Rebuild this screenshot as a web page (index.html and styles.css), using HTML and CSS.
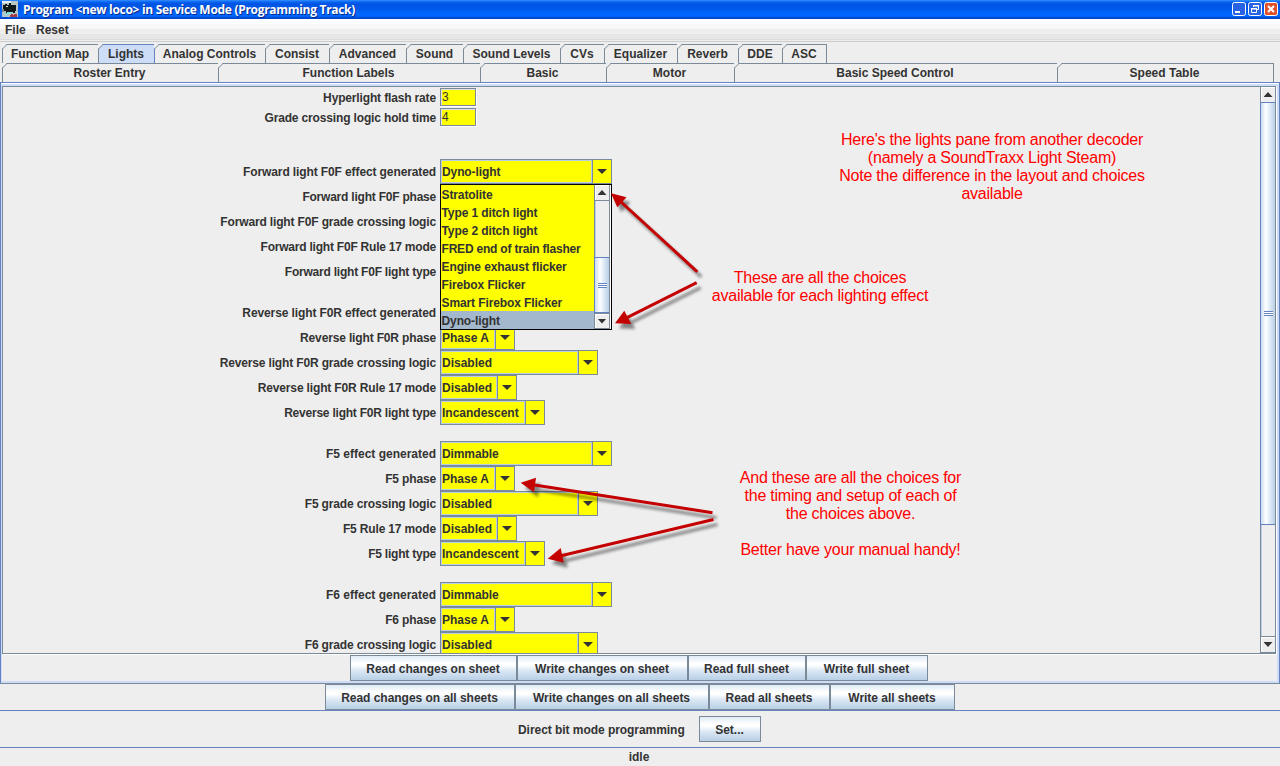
FILE: index.html
```html
<!DOCTYPE html>
<html lang="en">
<head>
<meta charset="utf-8">
<title>Program &lt;new loco&gt; in Service Mode (Programming Track)</title>
<link rel="stylesheet" href="styles.css">
</head>
<body>
<div class="window">
  <header class="titlebar">
    <svg class="app-icon" width="16" height="16" viewBox="0 0 16 16" shape-rendering="crispEdges">
      <rect width="16" height="16" fill="#b9c4c4"/><path d="M0 0h9v2H0z" fill="#e8f0ee"/><path d="M1 4h2v-1h2v1h2V2h2v2h5v6h-1v2h-2v-1H6v1H4v-2H2V8H1z" fill="#101818"/><path d="M0 8h2v3H0z" fill="#748888"/><path d="M5 11h5v2H5zM2 13h4v1H2z" fill="#7de0dc"/><path d="M8 14h1v-1h2v1h1v-1h3v3H8z" fill="#a33c44"/><path d="M4 5h2v1H4z" fill="#ddd"/>
    </svg>
    <span class="title-text">Program &lt;new loco&gt; in Service Mode (Programming Track)</span>
    <div class="win-buttons">
      <svg class="win-btn" width="14" height="14" viewBox="0 0 14 14"><rect x=".5" y=".5" width="13" height="13" rx="2" fill="#2a62e4" stroke="#fff"/><path d="M3 9h5v2H3z" fill="#fff"/></svg>
      <svg class="win-btn" width="14" height="14" viewBox="0 0 14 14"><rect x=".5" y=".5" width="13" height="13" rx="2" fill="#2a62e4" stroke="#fff"/><path d="M5.5 5V3.5h5v4H9" fill="none" stroke="#fff"/><path d="M5 3h6v1.5H5zM3 6h6v1.5H3z" fill="#fff"/><path d="M3.500 6.500h5v4h-5z" fill="none" stroke="#fff"/></svg>
      <svg class="win-btn" width="14" height="14" viewBox="0 0 14 14"><rect x=".5" y=".5" width="13" height="13" rx="2" fill="#e0502c" stroke="#fff"/><path d="M4 4l6 6M10 4l-6 6" stroke="#fff" stroke-width="2"/></svg>
    </div>
  </header>
  <nav class="menubar"><span class="menu-file">File</span><span>Reset</span></nav>

  <div class="tabs tabs-back">
    <div class="tab first w96"><svg class="cut"><use href="#cut"/></svg>Function Map</div>
    <div class="tab selected w56"><svg class="cut"><use href="#cut"/></svg>Lights</div>
    <div class="tab w111"><svg class="cut"><use href="#cut"/></svg>Analog Controls</div>
    <div class="tab w64"><svg class="cut"><use href="#cut"/></svg>Consist</div>
    <div class="tab w77"><svg class="cut"><use href="#cut"/></svg>Advanced</div>
    <div class="tab w57"><svg class="cut"><use href="#cut"/></svg>Sound</div>
    <div class="tab w97"><svg class="cut"><use href="#cut"/></svg>Sound Levels</div>
    <div class="tab w44"><svg class="cut"><use href="#cut"/></svg>CVs</div>
    <div class="tab w73"><svg class="cut"><use href="#cut"/></svg>Equalizer</div>
    <div class="tab w61"><svg class="cut"><use href="#cut"/></svg>Reverb</div>
    <div class="tab w44"><svg class="cut"><use href="#cut"/></svg>DDE</div>
    <div class="tab w44"><svg class="cut"><use href="#cut"/></svg>ASC</div>
  </div>
  <div class="tabs tabs-front">
    <div class="tab first w216"><svg class="cut"><use href="#cut"/></svg>Roster Entry</div>
    <div class="tab w262"><svg class="cut"><use href="#cut"/></svg>Function Labels</div>
    <div class="tab w126"><svg class="cut"><use href="#cut"/></svg>Basic</div>
    <div class="tab w128"><svg class="cut"><use href="#cut"/></svg>Motor</div>
    <div class="tab w323"><svg class="cut"><use href="#cut"/></svg>Basic Speed Control</div>
    <div class="tab w216"><svg class="cut"><use href="#cut"/></svg>Speed Table</div>
  </div>

  <main class="tab-content">
    <div class="scrollpane">
      <div class="viewport">
        <div class="form">
          <div class="row small"><label>Hyperlight flash rate</label><div class="field">3</div></div>
          <div class="row small"><label>Grade crossing logic hold time</label><div class="field">4</div></div>

          <section class="group group-forward">
            <div class="row"><label class="wide">Forward light F0F effect generated</label><div class="combo effect"><span>Dyno-light</span><i></i></div></div>
            <div class="row"><label class="tight">Forward light F0F phase</label></div>
            <div class="row"><label>Forward light F0F grade crossing logic</label></div>
            <div class="row"><label class="tight">Forward light F0F Rule 17 mode</label></div>
            <div class="row"><label class="tight">Forward light F0F light type</label></div>
            <div class="popup">
              <ul class="options">
                <li>Stratolite</li><li>Type 1 ditch light</li><li>Type 2 ditch light</li><li class="snug">FRED end of train flasher</li><li>Engine exhaust flicker</li><li>Firebox Flicker</li><li>Smart Firebox Flicker</li><li class="chosen">Dyno-light</li>
              </ul>
              <div class="scrollbar popup-bar"><div class="arrow-btn up"></div><div class="track"></div><div class="thumb"><b></b></div><div class="arrow-btn down"></div></div>
            </div>
          </section>

          <section class="group">
            <div class="row"><label class="wide">Reverse light F0R effect generated</label></div>
            <div class="row"><label>Reverse light F0R phase</label><div class="combo phase"><span>Phase A</span><i></i></div></div>
            <div class="row"><label>Reverse light F0R grade crossing logic</label><div class="combo crossing"><span>Disabled</span><i></i></div></div>
            <div class="row"><label>Reverse light F0R Rule 17 mode</label><div class="combo rule"><span>Disabled</span><i></i></div></div>
            <div class="row"><label class="tight">Reverse light F0R light type</label><div class="combo type"><span>Incandescent</span><i></i></div></div>
          </section>

          <section class="group">
            <div class="row"><label class="even">F5 effect generated</label><div class="combo effect"><span>Dimmable</span><i></i></div></div>
            <div class="row"><label>F5 phase</label><div class="combo phase"><span>Phase A</span><i></i></div></div>
            <div class="row"><label>F5 grade crossing logic</label><div class="combo crossing"><span>Disabled</span><i></i></div></div>
            <div class="row"><label>F5 Rule 17 mode</label><div class="combo rule"><span>Disabled</span><i></i></div></div>
            <div class="row"><label class="tight">F5 light type</label><div class="combo type"><span>Incandescent</span><i></i></div></div>
          </section>

          <section class="group">
            <div class="row"><label class="even">F6 effect generated</label><div class="combo effect"><span>Dimmable</span><i></i></div></div>
            <div class="row"><label>F6 phase</label><div class="combo phase"><span>Phase A</span><i></i></div></div>
            <div class="row"><label>F6 grade crossing logic</label><div class="combo crossing"><span>Disabled</span><i></i></div></div>
          </section>
        </div>
      </div>
      <div class="scrollbar main-bar"><div class="arrow-btn up"></div><div class="thumb"><b></b></div><div class="track"></div><div class="arrow-btn down"></div></div>
    </div>
    <div class="buttons sheet-buttons">
      <button class="b167">Read changes on sheet</button><button class="b171">Write changes on sheet</button><button class="b118">Read full sheet</button><button class="b122">Write full sheet</button>
    </div>
  </main>

  <div class="buttons all-buttons">
    <button class="b190">Read changes on all sheets</button><button class="b194">Write changes on all sheets</button><button class="b121">Read all sheets</button><button class="b125">Write all sheets</button>
  </div>
  <div class="mode"><span class="mode-text">Direct bit mode programming</span><button class="b62">Set...</button></div>
  <footer class="status">idle</footer>

  <svg class="arrows" width="1280" height="766">
    <defs>
      <g id="cut"><path d="M0 0h5L0 5z" fill="#eee"/><path d="M0 5.500L5.500 0" stroke="#7a8a99" fill="none"/></g>
      <filter id="soft" x="-10%" y="-10%" width="120%" height="130%"><feGaussianBlur stdDeviation="1.700"/></filter>
      <g id="pointers">
        <path d="M611 193.300L626.500 197.300L617.300 207.300z"/><path d="M620 201L697.300 271.800" class="shaft"/>
        <path d="M615 323.300L624.300 310.700L631.300 324z"/><path d="M626 318.200L696.700 282.700" class="shaft"/>
        <path d="M520.700 482.700L536 477.700L534 492.300z"/><path d="M533 484.700L712.500 512.700" class="shaft"/>
        <path d="M547.700 558.700L560.700 548L563.700 562.700z"/><path d="M560 556L713.500 519.500" class="shaft"/>
      </g>
    </defs>
    <use href="#pointers" class="shadow" x="4" y="5" filter="url(#soft)"/>
    <use href="#pointers" class="pointer"/>
  </svg>
  <p class="note note-intro">Here's the lights pane from another decoder<br>(namely a SoundTraxx Light Steam)<br>Note the difference in the layout and choices<br>available</p>
  <p class="note note-choices">These are all the choices<br>available for each lighting effect</p>
  <p class="note note-setup">And these are all the choices for<br>the timing and setup of each of<br>the choices above.<br><br>Better have your manual handy!</p>
</div>
</body>
</html>
```
FILE: styles.css
```css
* { box-sizing: border-box; }
body { margin: 0; background: #eee; color: #333; font: bold 12px/16px "Liberation Sans", Arial, sans-serif; overflow: hidden; }
.window { position: relative; width: 1280px; height: 766px; overflow: hidden; display: flex; flex-direction: column; white-space: nowrap; }

.titlebar { height: 19px; flex: none; display: flex; align-items: center; padding: 0 2px; background: linear-gradient(#3290ff 0, #0a64f0 2px, #0054e3 4px, #0058ea 9px, #0066ff 13px, #0066fc 16px, #0048d0 18px, #0040c4 19px); }
.app-icon { flex: none; margin-top: -1px; }
.title-text { flex: 1; margin-left: 5px; color: #fff; font: bold 12px/18px "Open Sans", sans-serif; letter-spacing: -.3px; text-shadow: 1px 1px #0a2a8c; }
.win-buttons { display: flex; gap: 2px; margin-top: -1px; }
.menubar { height: 25px; flex: none; display: flex; padding: 3px 5px; background: linear-gradient(#fff 0 5px, #f8f8f8 5px 10px, #eee 10px 15px, #e6e6e6 15px 20px, #dadada 20px 21px, #eee 21px 22px, #ccc 22px 23px, #eee 23px); }
.menu-file { width: 31px; }

.tabs { display: flex; height: 19px; flex: none; padding-left: 2px; }
.tab { position: relative; height: 19px; line-height: 19px; text-align: center; padding-right: 1px; border-top: 1px solid #7a8a99; border-right: 1px solid #7a8a99; }
.tabs-front .tab { padding-right: 2px; }
.tab.first { border-left: 1px solid #7a8a99; }
.first .cut { left: -1px; }
.tab.selected { background: #cdddf8; border-color: #6382bf; }
.cut { position: absolute; left: -1px; top: -1px; width: 6px; height: 6px; }
.w44 { width: 44px; } .w56 { width: 56px; } .w57 { width: 57px; } .w61 { width: 61px; } .w64 { width: 64px; } .w73 { width: 73px; } .w77 { width: 77px; } .w96 { width: 97px; } .w97 { width: 97px; } .w111 { width: 111px; } .w126 { width: 126px; } .w128 { width: 128px; } .w216 { width: 216px; } .w262 { width: 262px; } .w323 { width: 323px; }
.first.w216 { width: 217px; }

.tab-content { height: 602px; flex: none; border: 1px solid #6382bf; border-bottom-color: #7a8a99; box-shadow: inset 0 1px #fff, inset -2px 0 #cdddf8, inset 0 -2px #cdddf8, inset 1px 3px #cdddf8; padding: 3px 2px 2px 1px; display: flex; flex-direction: column; }
.scrollpane { height: 568px; display: flex; border: 1px solid #7a8a99; width: 1274px; box-shadow: 1px 1px #fff; }
.viewport { flex: 1; overflow: hidden; }
.form { padding-top: 1px; }
.row { display: flex; height: 25px; align-items: center; }
.row.small { height: 20px; }
label { width: 433px; text-align: right; margin-right: 4px; flex: none; letter-spacing: -.15px; }
label.wide { letter-spacing: -.11px; }
label.even { letter-spacing: 0; }
label.tight { letter-spacing: -.22px; }
.field { width: 36px; height: 18px; margin-bottom: 2px; border: 1px solid #7a8a99; background: #ff0; padding-left: 1px; font-weight: normal; line-height: 17px; box-shadow: inset 1px 1px #d8dfe6, 1px 1px #fff; }
.group { margin-bottom: 16px; }
.group-forward { position: relative; margin-top: 31px; }
.combo { display: flex; height: 25px; border: 1px solid #7a8a99; background: #ff0; }
.combo span { flex: 1; border: 1px solid #b8cfe5; line-height: 22px; }
.effect span { letter-spacing: -.1px; }
.combo i { width: 19px; border-left: 1px solid #7a8a99; display: flex; align-items: center; justify-content: center; }
.combo i::before { content: ""; width: 10px; height: 5px; background: #333; clip-path: polygon(0 0, 100% 0, 50% 100%); }
.effect { width: 172px; } .phase { width: 75px; } .crossing { width: 158px; } .rule { width: 77px; } .type { width: 105px; }

.popup { position: absolute; left: 437px; top: 25px; width: 172px; height: 146px; border: 1px solid #000; display: flex; background: #fff; z-index: 2; }
.options { list-style: none; margin: 0; padding: 0; flex: 1; background: #ff0; letter-spacing: -.1px; }
.options li { height: 18px; line-height: 20px; padding-left: .5px; }
.options .snug { letter-spacing: -.2px; }
.options .chosen { background: #a3b8cc; }
.scrollbar { display: flex; flex-direction: column; width: 15px; flex: none; border-left: 1px solid #7a8a99; }
.popup-bar { width: 16px; border-right: 1px solid #7a8a99; margin-right: 1px; }
.arrow-btn { height: 15px; flex: none; display: flex; align-items: center; justify-content: center; background: #eee; box-shadow: inset 1px 1px #fff; }
.arrow-btn::before { content: ""; width: 9px; height: 5px; background: #333; clip-path: polygon(50% 0, 100% 100%, 0 100%); }
.down::before { clip-path: polygon(0 0, 100% 0, 50% 100%); }
.track { flex: 1; background: #eee; border-left: 1px solid #b8cfe5; }
.down { border-top: 1px solid #7a8a99; border-bottom: 1px solid #7a8a99; height: 16px; }
.thumb { border: 1px solid #6382bf; border-width: 1px 0; margin-left: -1px; border-left: 1px solid #6382bf; background: linear-gradient(90deg, #c8dcef 0, #fff 35%, #e6f0f9 55%, #b8cfe5 100%); display: flex; align-items: center; justify-content: center; }
.thumb b { width: 9px; height: 5px; background: repeating-linear-gradient(#6382bf 0 1px, #fff 1px 2px); }
.main-bar .thumb { height: 423px; }
.main-bar .down { height: 17px; }
.popup-bar .up { height: 16px; border-bottom: 1px solid #7a8a99; }
.popup-bar .thumb { height: 56px; }

.buttons { display: flex; justify-content: center; flex: none; }
.sheet-buttons { margin-top: 1px; padding-right: 1px; }
.all-buttons { height: 27px; border-bottom: 1px solid #6382bf; }
button { height: 26px; padding: 2px 1px 0 0; border: 1px solid #7a8a99; border-radius: 0; background: linear-gradient(#dfebf6 0, #fff 30%, #fff 38%, #dce8f5 60%, #b8cfe5 100%); color: #333; font: inherit; letter-spacing: -.03px; flex: none; }
.b62 { width: 62px; } .b118 { width: 118px; } .b121 { width: 121px; } .b122 { width: 122px; } .b125 { width: 125px; } .b167 { width: 167px; } .b171 { width: 171px; } .b190 { width: 190px; } .b194 { width: 194px; }
.mode { height: 37px; flex: none; display: flex; justify-content: flex-start; padding-left: 518px; align-items: center; border-bottom: 1px solid #6382bf; }
.mode-text { width: 181px; padding-top: 1px; letter-spacing: -.05px; }
.status { text-align: center; padding-right: 2px; height: 18px; line-height: 18px; }

.arrows { position: absolute; left: 0; top: 0; z-index: 3; pointer-events: none; }
.pointer { fill: #c40000; stroke: #c40000; stroke-width: 0; }
.shadow { fill: #000; stroke: #000; stroke-width: 0; opacity: .45; }
.shaft { stroke-width: 3; }
.note { position: absolute; z-index: 4; margin: 0; color: #f00; text-align: center; font: 16px/18px "Liberation Sans", Arial, sans-serif; letter-spacing: -.22px; transform: translateX(-50%); }
.note-intro { left: 992px; top: 131px; }
.note-choices { left: 820px; top: 269px; }
.note-setup { left: 850.500px; top: 469px; }
```
